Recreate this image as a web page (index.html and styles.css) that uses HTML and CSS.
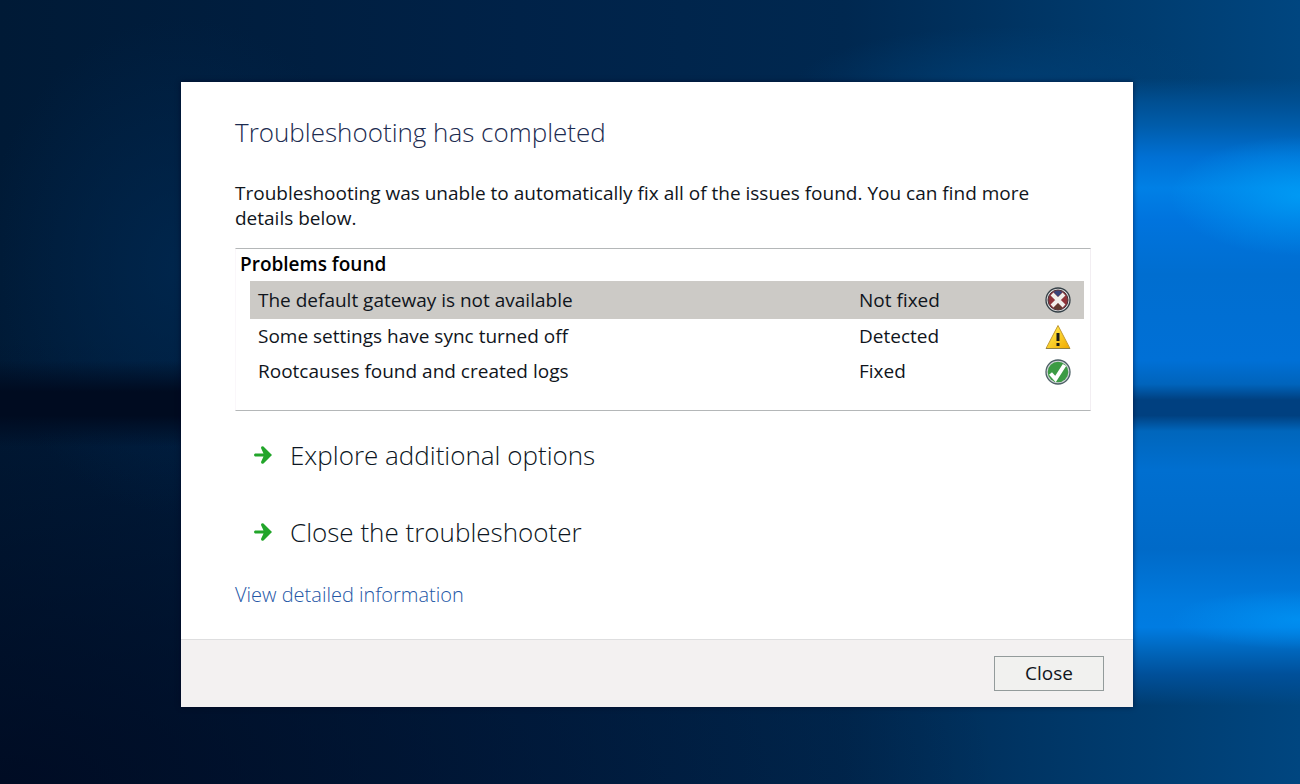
FILE: index.html
```
<!DOCTYPE html>
<html lang="en">
<head>
  <meta charset="UTF-8" />
  <meta name="viewport" content="width=device-width, initial-scale=1.0" />
  <title>Troubleshooting has completed</title>
  <link rel="stylesheet" href="styles.css">
</head>
<body>
  <main class="dialog">
    <div class="content">
      <h1>Troubleshooting has completed</h1>
      <p class="intro">Troubleshooting was unable to automatically fix all of the issues found. You can find more details below.</p>

      <section class="problems">
        <h2>Problems found</h2>
        <table>
          <tr class="selected">
            <td>The default gateway is not available</td>
            <td class="status">Not fixed</td>
            <td class="icon">
              <svg width="26" height="26" viewBox="0 0 26 26" role="img" aria-label="Not fixed">
                <circle cx="13" cy="13" r="12" fill="#dcdede" stroke="#354047" stroke-width="1.3" />
                <circle cx="13" cy="13" r="10" fill="#8f3339" stroke="#4a343b" />
                <path d="M8.500 5a8 8 0 0 1 9 0L13 10z" fill="#394579" />
                <path d="M8.500 21a8 8 0 0 0 9 0L13 16z" fill="#603b30" />
                <path d="M7 7l12 12M19 7L7 19" stroke="#f0efeb" stroke-width="4" />
              </svg>
            </td>
          </tr>
          <tr>
            <td>Some settings have sync turned off</td>
            <td class="status">Detected</td>
            <td class="icon">
              <svg width="26" height="26" viewBox="0 0 26 26" role="img" aria-label="Warning">
                <defs>
                  <linearGradient id="warn" x1="0" y1="0" x2="1" y2="1">
                    <stop offset="0.3" stop-color="#ffdf3c" />
                    <stop offset="1" stop-color="#f0a800" />
                  </linearGradient>
                </defs>
                <path d="M13 1.500L25 24.500H1z" fill="url(#warn)" stroke="#c29a38" stroke-linejoin="round" />
                <path d="M1 24.500h24" stroke="#8f8046" />
                <path d="M11.500 9h3v8h-3zM11.500 19h3v3h-3z" fill="#171a16" />
              </svg>
            </td>
          </tr>
          <tr>
            <td>Rootcauses found and created logs</td>
            <td class="status">Fixed</td>
            <td class="icon">
              <svg width="26" height="26" viewBox="0 0 26 26" role="img" aria-label="Fixed">
                <circle cx="13" cy="13" r="12" fill="#d0d4d8" stroke="#4d6065" stroke-width="1.3" />
                <circle cx="13" cy="13" r="10.300" fill="#3c9b44" />
                <path d="M5.500 14.500l5 5.500L19.500 6" fill="none" stroke="#fff" stroke-width="4" />
              </svg>
            </td>
          </tr>
        </table>
      </section>

      <nav class="options">
        <a href="#explore">
          <svg class="arrow" width="20" height="20" viewBox="0 0 20 20" aria-hidden="true">
            <path d="M2 8.500h8.500L8 3q0-2.500 2.500-1.500L19 10l-8.500 8.500Q8 19.500 8 17l2.500-5.500H2q-2-1.500 0-3z" fill="#22a52a" />
          </svg>
          Explore additional options
        </a>
        <a href="#close">
          <svg class="arrow" width="20" height="20" viewBox="0 0 20 20" aria-hidden="true">
            <path d="M2 8.500h8.500L8 3q0-2.500 2.500-1.500L19 10l-8.500 8.500Q8 19.500 8 17l2.500-5.500H2q-2-1.500 0-3z" fill="#22a52a" />
          </svg>
          Close the troubleshooter
        </a>
      </nav>

      <a class="details" href="#details">View detailed information</a>
    </div>

    <footer>
      <button type="button">Close</button>
    </footer>
  </main>
</body>
</html>
```

FILE: styles.css
```
* {
  box-sizing: border-box;
}

body {
  margin: 0;
  min-height: 100vh;
  padding: 82px 167px 77px 181px;
  font-family: "Open Sans", "Segoe UI", sans-serif;
  font-size: 19px;
  line-height: 25px;
  color: #10151c;
  background:
    radial-gradient(ellipse 130px 60px at 100% 25%, rgba(0, 165, 250, 0.7), transparent) no-repeat,
    radial-gradient(ellipse 130px 30px at 100% 79%, rgba(0, 155, 250, 0.6), transparent) no-repeat,
    linear-gradient(to bottom,
      transparent 10%, #004f92 13%, #005caa 16%, #0070d4 20%, #0080e6 24%,
      #0074de 28%, #006ed0 35%, #0070d6 46%, #0064bc 49%, #004080 51%,
      #004080 53%, #0066bc 55%, #006fd0 60%, #006ac8 70%, #007ade 77%,
      #007ce2 80%, #0066bc 83%, #00509a 86%, transparent 90%)
      right / 168px 100% no-repeat,
    linear-gradient(to bottom, transparent 46%, #000b20 50%, #000b20 53%, transparent 57%)
      left / 200px 100% no-repeat,
    radial-gradient(ellipse 200px 250px at 14% 34%, rgba(0, 40, 80, 0.8), transparent) no-repeat,
    radial-gradient(ellipse 220px 60px at 78% 11%, rgba(0, 65, 120, 0.7), transparent) no-repeat,
    radial-gradient(ellipse 1000px 450px at 0 100%, rgba(0, 6, 28, 0.7), transparent) no-repeat,
    linear-gradient(to right, #001a36, #002248 40%, #002850 65%, #003a6c 85%, #004680);
}

.dialog {
  background: #fff;
  box-shadow: 0 0 5px rgba(0, 0, 30, 0.6);
}

.content {
  padding: 33px 42px 32px 54px;
}

h1 {
  margin: 0;
  font-size: 26px;
  line-height: 34px;
  font-weight: 300;
  color: #1c2b50;
}

.intro {
  margin: 32px 0 17px;
}

.problems {
  height: 163px;
  padding: 3px 6px 0 4px;
  border: 1px solid #b4b7b8;
  border-left-color: #faf7fa;
  border-right-color: #f2eef2;
}

h2 {
  margin: 0 0 4px;
  font-size: 19px;
  line-height: 25px;
  font-weight: 600;
  color: #000;
}

table {
  width: calc(100% - 10px);
  margin-left: 10px;
  border-collapse: collapse;
}

td {
  height: 35px;
  padding: 0 0 0 8px;
}

.selected {
  background: #cccac6;
}

.selected td {
  height: 38px;
}

td.status {
  width: 186px;
  padding: 0;
}

td.icon {
  width: 39px;
  padding: 0;
}

td svg {
  display: block;
}

.options {
  display: flex;
  flex-direction: column;
  align-items: flex-start;
  gap: 43px;
  margin: 27px 0 33px 18px;
}

.options a {
  display: flex;
  align-items: center;
  gap: 17px;
  font-size: 26px;
  line-height: 34px;
  font-weight: 300;
  color: #0b1522;
  text-decoration: none;
}

.arrow {
  flex: none;
}

.details {
  display: block;
  color: #2457a6;
  font-size: 20px;
  font-weight: 300;
  text-decoration: none;
}

footer {
  display: flex;
  justify-content: flex-end;
  padding: 16px 29px;
  background: #f3f1f1;
  border-top: 1px solid #dededf;
}

footer button {
  width: 110px;
  height: 35px;
  padding: 0;
  border: 1px solid #939b9b;
  background: #f1f1ef;
  color: #10151c;
  font: inherit;
}
```
